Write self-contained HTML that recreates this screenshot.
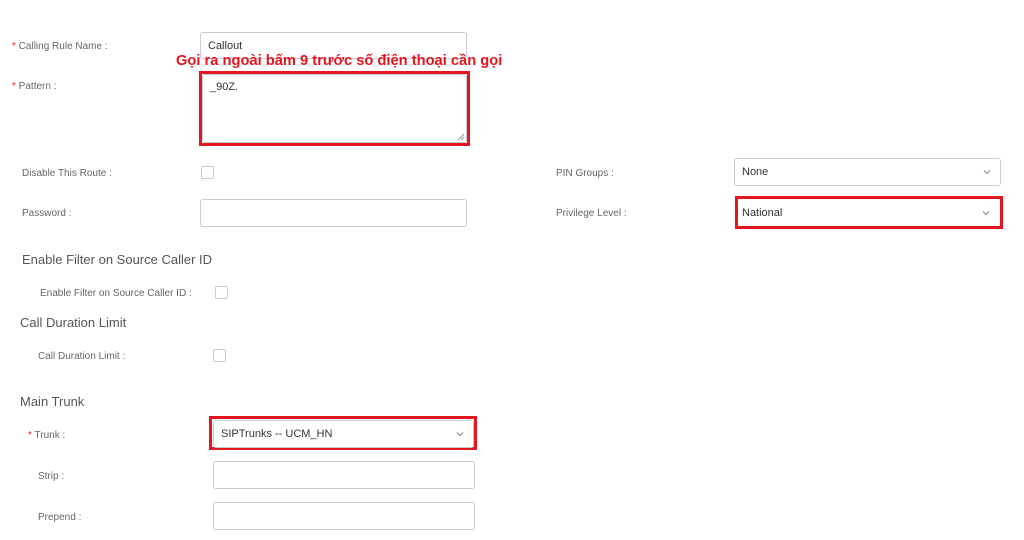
<!DOCTYPE html>
<html><head><meta charset="utf-8"><style>
*{box-sizing:border-box;margin:0;padding:0}
body{width:1024px;height:540px;background:#fff;position:relative;overflow:hidden;font-family:"Liberation Sans",sans-serif}
.a{position:absolute}
.lbl{font-size:10px;color:#666;line-height:12px}
.star{color:#e02020;font-size:10px}
.inp{position:absolute;border:1px solid #c8ccd2;border-radius:3px;background:#fff;font-size:11px;color:#333;padding-left:7px;display:flex;align-items:center}
.cb{position:absolute;width:13px;height:13px;border:1px solid #c8ccd2;border-radius:2px;background:#fff}
.red{position:absolute;border:3px solid #e3151e}
.h{position:absolute;font-size:13px;color:#555}
.arr{position:absolute;right:9px;top:50%;margin-top:-3px}
</style></head><body>
<div class="a lbl" style="left:12px;top:41px"><span class="star">*</span> Calling Rule Name :</div>
<div class="inp" style="left:200px;top:32px;width:267px;height:27px">Callout</div>
<div class="a" style="left:176px;top:53px;font-size:14.7px;font-weight:bold;color:#e3151e;white-space:nowrap">Gọi ra ngoài bấm 9 trước số điện thoại cần gọi</div>
<div class="a lbl" style="left:12px;top:81px"><span class="star">*</span> Pattern :</div>
<div class="red" style="left:199px;top:71px;width:271px;height:75px"></div>
<div class="inp" style="left:202px;top:74px;width:265px;height:69px;align-items:flex-start;padding-top:6px">_90Z.
<svg class="a" style="right:1px;bottom:1px" width="8" height="8"><path d="M7 1L1 7M7 4L4 7" stroke="#999" stroke-width="1"/></svg></div>
<div class="a lbl" style="left:22px;top:168px">Disable This Route :</div>
<div class="cb" style="left:201px;top:166px"></div>
<div class="a lbl" style="left:556px;top:168px">PIN Groups :</div>
<div class="inp" style="left:734px;top:158px;width:267px;height:28px">None<svg class="arr" width="8" height="6"><path d="M1 1.5L4 4.5L7 1.5" stroke="#888" fill="none"/></svg></div>
<div class="a lbl" style="left:22px;top:208px">Password :</div>
<div class="inp" style="left:200px;top:199px;width:267px;height:28px"></div>
<div class="a lbl" style="left:556px;top:208px">Privilege Level :</div>
<div class="red" style="left:735px;top:196px;width:268px;height:33px"></div>
<div class="inp" style="left:738px;top:199px;width:262px;height:27px;border-color:#fff;padding-left:3px">National<svg class="arr" width="8" height="6"><path d="M1 1.5L4 4.5L7 1.5" stroke="#888" fill="none"/></svg></div>
<div class="h" style="left:22px;top:252px">Enable Filter on Source Caller ID</div>
<div class="a lbl" style="left:40px;top:288px">Enable Filter on Source Caller ID :</div>
<div class="cb" style="left:215px;top:286px"></div>
<div class="h" style="left:20px;top:315px">Call Duration Limit</div>
<div class="a lbl" style="left:38px;top:351px">Call Duration Limit :</div>
<div class="cb" style="left:213px;top:349px"></div>
<div class="h" style="left:20px;top:394px">Main Trunk</div>
<div class="a lbl" style="left:28px;top:430px"><span class="star">*</span> Trunk :</div>
<div class="red" style="left:209px;top:416px;width:268px;height:34px"></div>
<div class="inp" style="left:213px;top:420px;width:261px;height:28px">SIPTrunks -- UCM_HN<svg class="arr" width="8" height="6"><path d="M1 1.5L4 4.5L7 1.5" stroke="#888" fill="none"/></svg></div>
<div class="a lbl" style="left:38px;top:471px">Strip :</div>
<div class="inp" style="left:213px;top:461px;width:262px;height:28px"></div>
<div class="a lbl" style="left:38px;top:512px">Prepend :</div>
<div class="inp" style="left:213px;top:502px;width:262px;height:28px"></div>
</body></html>
